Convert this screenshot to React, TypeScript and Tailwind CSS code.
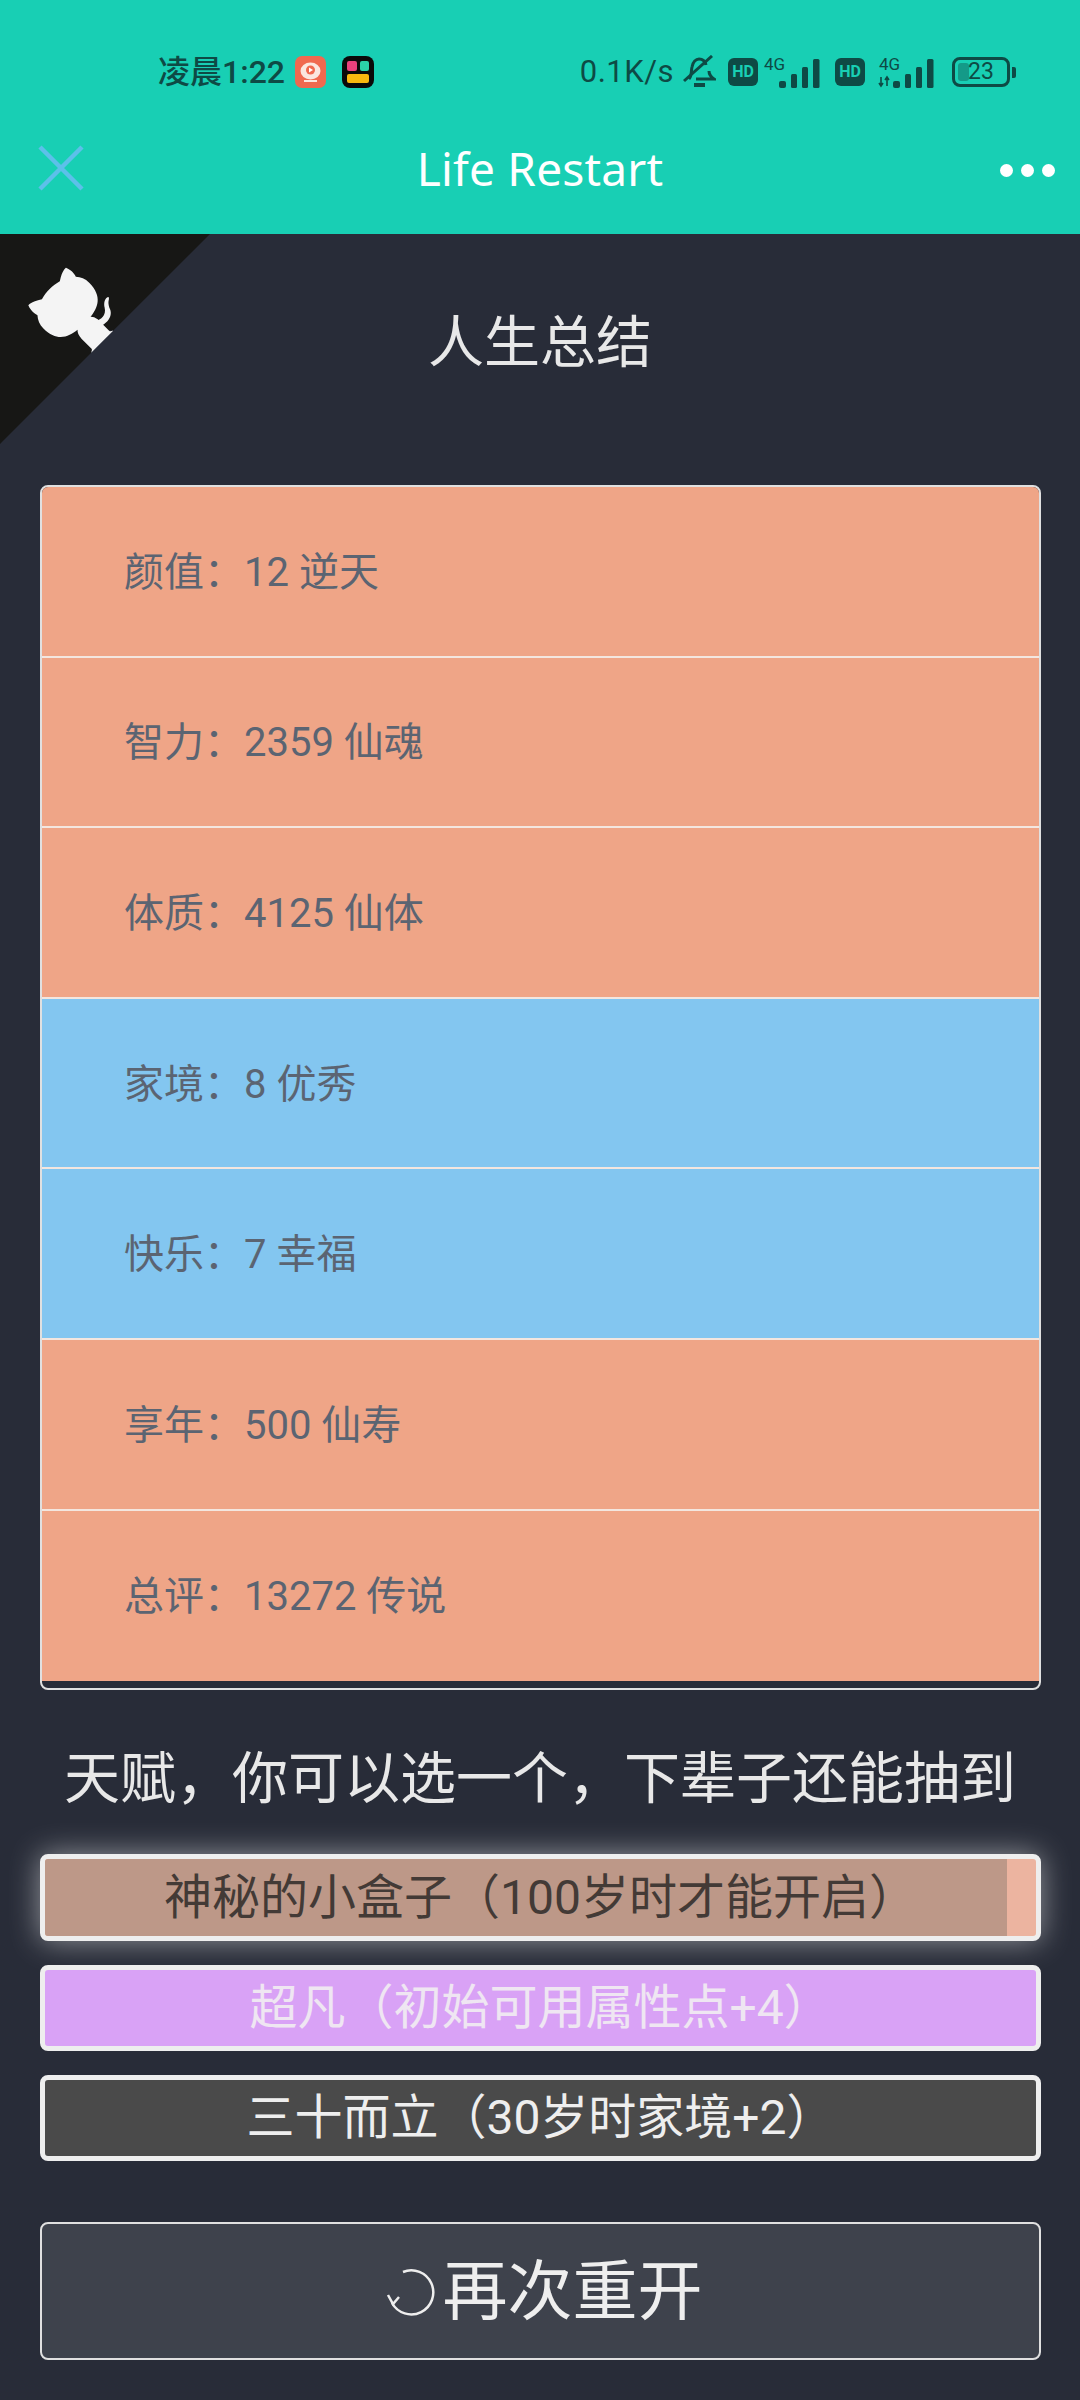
const cjk = "font-['Roboto','Noto_Sans_CJK_SC',sans-serif]";

const stats = [
  { label: "颜值：12 逆天", bg: "bg-[#efa587]" },
  { label: "智力：2359 仙魂", bg: "bg-[#efa587]" },
  { label: "体质：4125 仙体", bg: "bg-[#efa587]" },
  { label: "家境：8 优秀", bg: "bg-[#83c6f0]" },
  { label: "快乐：7 幸福", bg: "bg-[#83c6f0]" },
  { label: "享年：500 仙寿", bg: "bg-[#efa587]" },
  { label: "总评：13272 传说", bg: "bg-[#efa587]" },
];

function Signal({ small }: { small?: boolean }) {
  return (
    <svg width="60" height="34" viewBox="0 0 60 34" className="shrink-0">
      <text x={small ? 1 : 0} y="15" fontSize="17" fontFamily="Roboto" fill="#0e4a45">4G</text>
      {small && <path d="M3 22v9M1 28l2 3 2-3M9 31v-9M7 25l2-3 2 3" stroke="#0e4a45" strokeWidth="1.6" fill="none" />}
      <rect x="15" y="26" width="7" height="7" rx="2" fill="#0e4a45" />
      <rect x="27" y="19" width="6" height="14" rx="1.5" fill="#0e4a45" />
      <rect x="38" y="12" width="6" height="21" rx="1.5" fill="#0e4a45" />
      <rect x="49" y="4" width="6.5" height="29" rx="1.5" fill="#0e4a45" />
    </svg>
  );
}

function Hd() {
  return (
    <div className="w-[30px] h-[28px] rounded-[6px] bg-[#0e4a45] flex items-center justify-center text-[16px] leading-none font-bold text-[#18cfb4] font-['Roboto',sans-serif] shrink-0">
      HD
    </div>
  );
}

function StatusBar() {
  return (
    <div className={`h-[102px] pt-[56px] pl-[158px] pr-[64px] flex items-start justify-between text-[#0e4a45] ${cjk}`}>
      <div className="flex items-center h-[32px]">
        <span className="text-[32px] leading-[32px] font-medium">凌晨1:22</span>
        <svg width="31" height="32" viewBox="0 0 31 32" className="ml-[10px]">
          <rect width="31" height="32" rx="7" fill="#f0694f" />
          <ellipse cx="15.5" cy="15" rx="10" ry="8.5" fill="#fbe6df" />
          <circle cx="15.5" cy="14" r="4.5" fill="#f0694f" />
          <path d="M14 11.5l4 2.5-4 2.5z" fill="#fff" />
          <rect x="9" y="24" width="13" height="2" fill="#fbe6df" />
        </svg>
        <svg width="32" height="32" viewBox="0 0 32 32" className="ml-[16px]">
          <rect width="32" height="32" rx="8" fill="#0a0a0a" />
          <rect x="5" y="5" width="10" height="10" rx="2" fill="#e8417c" />
          <rect x="18" y="5" width="9" height="10" rx="2" fill="#2bd1a8" />
          <rect x="5" y="18" width="22" height="9" rx="2" fill="#f8b80f" />
        </svg>
      </div>
      <div className="flex items-center h-[32px]">
        <span className="text-[31px] leading-[32px] font-['Roboto',sans-serif] mr-[9px] tracking-[0.5px]">0.1K/s</span>
        <svg width="33" height="34" viewBox="0 0 33 34" fill="none" stroke="#0e4a45" strokeWidth="3" className="shrink-0">
          <path d="M6 24c3-3 2-8 3-12 1-5 4-8 7-8s6 2 7 6M26 16c0 3 2 6 5 8H13" />
          <path d="M1 26L29 1" />
          <path d="M11 30h11" strokeWidth="4" />
        </svg>
        <div className="ml-[12px] mr-[6px] flex"><Hd /></div>
        <Signal />
        <div className="ml-[11px] mr-[13px] flex"><Hd /></div>
        <Signal small />
        <div className="ml-[14px] w-[58px] h-[30px] rounded-[8px] border-[3px] border-[#0e4a45] p-[3px] shrink-0">
          <div className="w-[24%] h-full bg-[#149a88] rounded-[3px]" />
        </div>
        <div className="relative -ml-[58px] w-[58px] text-center text-[23px] leading-[30px] font-['Roboto',sans-serif] shrink-0">23</div>
        <div className="ml-[2px] w-[4px] h-[11px] rounded-r-[2px] bg-[#0e4a45] shrink-0" />
      </div>
    </div>
  );
}

function NavBar() {
  return (
    <div className="relative h-[132px] pl-[38px] pr-[25px] flex items-center justify-between">
      <svg width="46" height="46" viewBox="0 0 46 46" stroke="#5cc0ea" strokeWidth="4.5">
        <path d="M2 2l42 42M44 2L2 44" />
      </svg>
      <div className="absolute left-0 right-0 top-[38px] text-center text-[46px] leading-[56px] text-white font-['Noto_Sans',sans-serif] tracking-[0.2px]">
        Life Restart
      </div>
      <div className="flex gap-[8px] pt-[4px]">
        <div className="w-[13px] h-[13px] rounded-full bg-white" />
        <div className="w-[13px] h-[13px] rounded-full bg-white" />
        <div className="w-[13px] h-[13px] rounded-full bg-white" />
      </div>
    </div>
  );
}

function GithubCorner() {
  return (
    <svg width="210" height="210" viewBox="0 0 250 250" className="absolute left-0 top-0 -scale-x-100">
      <path d="M0,0 L115,115 L130,115 L142,142 L250,250 L250,0 Z" fill="#171715" />
      <path
        d="M128.3,109.0 C113.8,99.7 119.0,89.6 119.0,89.6 C122.0,82.7 120.5,78.6 120.5,78.6 C119.2,72.0 123.4,76.3 123.4,76.3 C127.3,80.9 125.5,87.3 125.5,87.3 C122.9,97.6 130.6,101.9 134.4,103.2"
        fill="#f4f4f4"
      />
      <path
        d="M115.0,115.0 C114.9,115.1 118.7,116.5 119.8,115.4 L133.7,101.6 C136.9,99.2 139.9,98.4 142.2,98.6 C133.8,88.0 127.5,74.4 143.8,58.0 C148.5,53.4 154.0,51.2 159.7,51.0 C160.3,49.4 163.2,43.6 171.4,40.1 C171.4,40.1 176.1,42.5 178.8,56.2 C183.1,58.6 187.2,61.8 190.9,65.4 C194.5,69.0 197.7,73.2 200.1,77.6 C213.8,80.2 216.3,84.9 216.3,84.9 C212.7,93.1 206.9,96.0 205.4,96.6 C205.1,102.4 203.0,107.8 198.3,112.5 C181.9,128.9 168.3,122.5 157.7,114.1 C157.9,116.9 156.7,120.9 152.7,124.9 L141.0,136.5 C139.8,137.7 141.6,141.9 141.8,141.8 Z"
        fill="#f4f4f4"
      />
    </svg>
  );
}

export default function App() {
  return (
    <div className={`w-[1080px] h-[2400px] bg-[#282c38] overflow-hidden ${cjk}`}>
      <div className="h-[234px] bg-[#18cfb4]">
        <StatusBar />
        <NavBar />
      </div>

      <div className="relative">
        <GithubCorner />
        <div className="h-[251px] pt-[73px] text-center text-[56px] leading-[72px] text-[#e8e8e8]">人生总结</div>

        <div className="ml-[40px] w-[1001px] h-[1205px] border-2 border-[#e0e0e0] rounded-[8px] overflow-hidden">
          {stats.map((s, i) => (
            <div
              key={s.label}
              className={`${s.bg} h-[170.6px] pl-[82px] pt-[3px] flex items-center text-[40px] text-[#5b6472] ${
                i < stats.length - 1 ? "border-b-2 border-[#f3e6df]" : ""
              }`}
            >
              {s.label}
            </div>
          ))}
        </div>

        <div className="h-[164px] pt-[13px] flex items-center justify-center text-[56px] text-[#e8e8e8] whitespace-nowrap">
          天赋，你可以选一个，下辈子还能抽到
        </div>

        <div className="ml-[40px] w-[1001px] flex flex-col gap-[24px]">
          <div className="relative h-[87px] border-[5px] border-[#eeeeee] rounded-[8px] bg-[#ecb4a0] shadow-[0_0_30px_rgba(255,255,255,0.5)] overflow-hidden">
            <div className="h-full w-[962px] bg-[#bd9888]" />
            <div className="absolute inset-0 flex items-center justify-center text-[48px] text-[#433a36] whitespace-nowrap">
              神秘的小盒子（100岁时才能开启）
            </div>
          </div>
          <div className="h-[86px] border-[5px] border-[#eeeeee] rounded-[8px] bg-[#d9a2f6] flex items-center justify-center text-[48px] text-[#efe6f2] whitespace-nowrap">
            超凡（初始可用属性点+4）
          </div>
          <div className="h-[86px] border-[5px] border-[#eeeeee] rounded-[8px] bg-[#4a4a4a] flex items-center justify-center text-[48px] text-[#eeeeee] whitespace-nowrap">
            三十而立（30岁时家境+2）
          </div>
        </div>

        <div className="ml-[40px] w-[1001px] mt-[61px] h-[138px] pt-[4px] pl-[8px] border-2 border-[#e0e0e0] rounded-[8px] bg-[#3e424c] flex items-center justify-center text-[65px] text-[#eeeeee]">
          <svg width="50" height="50" viewBox="0 0 50 50" fill="none" stroke="#eeeeee" strokeWidth="2.5" className="mr-[6px]">
            <path d="M17 4a22 22 0 1 1-11 31" />
            <path d="M2 27l5 9 6-7" />
          </svg>
          <span>再次重开</span>
        </div>
      </div>
    </div>
  );
}
